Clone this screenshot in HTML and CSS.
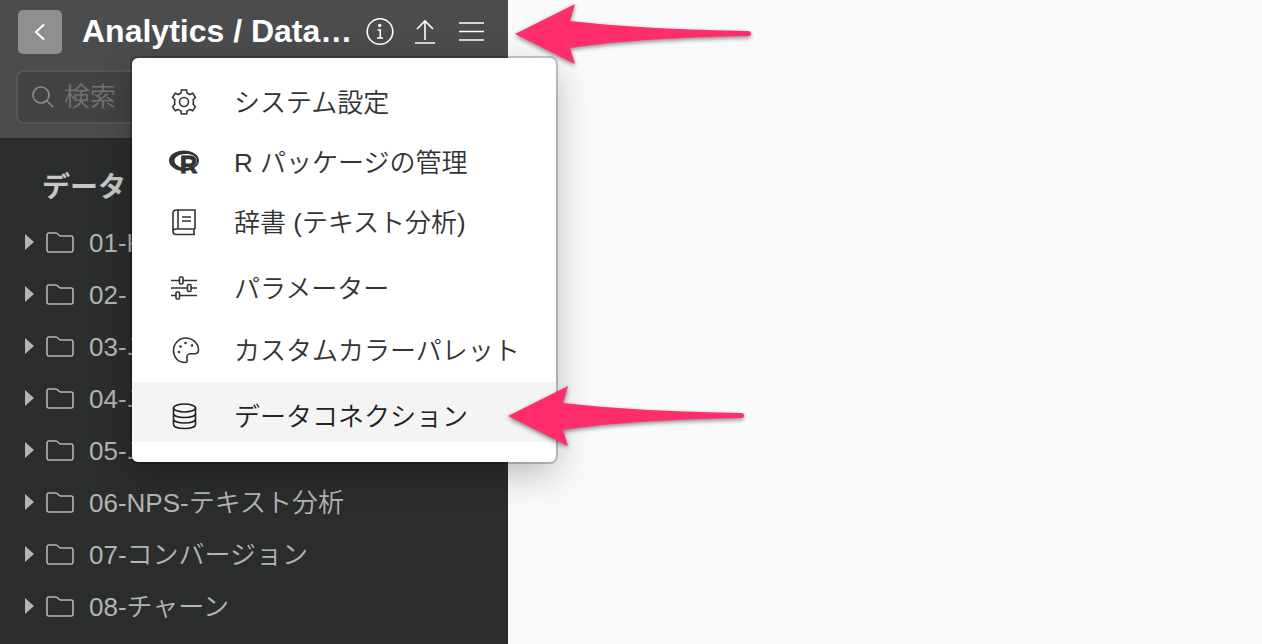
FILE: index.html
```html
<!DOCTYPE html>
<html lang="ja">
<head>
  <meta charset="UTF-8">
  <meta name="viewport" content="width=device-width, initial-scale=1.0">
  <title>Analytics</title>
  <link rel="stylesheet" href="styles.css">
</head>
<body>
  <aside class="sidebar">
    <header class="top">
      <div class="title-row">
        <button class="back" aria-label="戻る">
          <svg width="20" height="24" viewBox="0 0 20 24"><path d="M14 4.500L6 12l8 7.500"/></svg>
        </button>
        <h1>Analytics / Data…</h1>
        <div class="actions">
          <button aria-label="情報">
            <svg width="28" height="28" viewBox="0 0 28 28">
              <circle cx="14" cy="13.500" r="12.800"/>
              <circle class="dot" cx="13.700" cy="7.500" r="1.700"/>
              <path d="M11.500 12h2.800v7.500M11 20h6"/>
            </svg>
          </button>
          <button aria-label="アップロード">
            <svg width="24" height="28" viewBox="0 0 24 28"><path d="M11 22V3M3 11l8-8 8 8M1 25h20"/></svg>
          </button>
          <button aria-label="メニュー">
            <svg width="28" height="28" viewBox="0 0 28 28"><path d="M1 5h25M1 13.500h25M1 22h25"/></svg>
          </button>
        </div>
      </div>
      <div class="search">
        <svg width="22" height="22" viewBox="0 0 22 22"><circle cx="9" cy="9" r="8"/><path d="M15 15l6 6"/></svg>
        <input type="search" placeholder="検索" aria-label="検索">
      </div>
    </header>

    <section class="frames">
      <h2>データ</h2>
      <ul>
        <li><i class="arrow"></i><svg width="28" height="22"><use href="#folder"/></svg><a href="#">01-K</a></li>
        <li><i class="arrow"></i><svg width="28" height="22"><use href="#folder"/></svg><a href="#">02-</a></li>
        <li><i class="arrow"></i><svg width="28" height="22"><use href="#folder"/></svg><a href="#">03-ユ</a></li>
        <li><i class="arrow"></i><svg width="28" height="22"><use href="#folder"/></svg><a href="#">04-ユ</a></li>
        <li><i class="arrow"></i><svg width="28" height="22"><use href="#folder"/></svg><a href="#">05-ユ</a></li>
        <li><i class="arrow"></i><svg width="28" height="22"><use href="#folder"/></svg><a href="#">06-NPS-テキスト分析</a></li>
        <li><i class="arrow"></i><svg width="28" height="22"><use href="#folder"/></svg><a href="#">07-コンバージョン</a></li>
        <li><i class="arrow"></i><svg width="28" height="22"><use href="#folder"/></svg><a href="#">08-チャーン</a></li>
      </ul>
    </section>
  </aside>

  <nav class="menu">
    <div class="group">
      <button>
        <svg width="32" height="32" viewBox="0 0 32 32">
          <path d="M13.500 4h5l.7 3.200c1 .3 1.700.7 2.400 1.300l3.200-1.300 2.600 4.300-2.200 2.300c.3 1.500.3 3 0 4.400l2.200 2.300-2.600 4.300-3.200-1.300c-.7.600-1.400 1-2.400 1.300l-.7 3.200h-5l-.7-3.200c-1-.3-1.700-.7-2.400-1.300l-3.200 1.300-2.600-4.300 2.200-2.300c-.3-1.400-.3-2.900 0-4.400l-2.200-2.300 2.600-4.300 3.200 1.300c.7-.6 1.400-1 2.400-1.300z"/>
          <circle cx="16" cy="16" r="4.500"/>
        </svg>
        システム設定
      </button>
      <button>
        <svg class="r-logo" width="32" height="32" viewBox="0 0 32 32" aria-hidden="true">
          <path fill-rule="evenodd" d="M16 4.500c8.300 0 15 4.400 15 10s-6.700 10.500-15 10.500S1 20.100 1 14.500s6.700-10 15-10zM18 8C11.400 8 6.500 10.800 6.500 14.800S11.400 22 18 22s11-2.800 11-7.200S24.600 8 18 8z"/>
          <text x="12" y="27">R</text>
        </svg>
        R パッケージの管理
      </button>
      <button>
        <svg width="32" height="32" viewBox="0 0 32 32">
          <path d="M27 23V4H8.500C6 4 5 5.500 5 7.500V25M27 23H8c-4 0-4 5.500 0 5.500h19M26 23v5.500M10 4v19M14 11h9M14 15h9"/>
        </svg>
        辞書 (テキスト分析)
      </button>
    </div>
    <div class="group spaced">
      <button>
        <svg width="32" height="32" viewBox="0 0 32 32">
          <path d="M3 8.500h8M15 8.500h14M3 16h16M23 16h6M3 23.500h5M12 23.500h17"/>
          <rect x="11.500" y="5" width="3.500" height="7" rx="1"/>
          <rect x="19.500" y="12.500" width="3.500" height="7" rx="1"/>
          <rect x="8" y="20" width="3.500" height="7" rx="1"/>
        </svg>
        パラメーター
      </button>
      <button>
        <svg width="32" height="32" viewBox="0 0 32 32">
          <path d="M17 28.500C10 28.500 5.500 23 5.500 16.500S11 4 17.500 4C25 4 30.500 9.500 30.500 16c0 3-1.500 3.800-4 3.800h-4c-3 0-4 2-3.500 4.700.6 3 0 4-2 4z"/>
          <g class="dot">
            <circle cx="11" cy="18" r="1.300"/>
            <circle cx="12.500" cy="12.500" r="1.300"/>
            <circle cx="17.500" cy="9" r="1.300"/>
            <circle cx="24" cy="11.500" r="1.300"/>
          </g>
        </svg>
        カスタムカラーパレット
      </button>
      <button class="active">
        <svg width="32" height="32" viewBox="0 0 32 32">
          <ellipse cx="16.500" cy="8" rx="11" ry="4"/>
          <path d="M5.500 8v16.500c0 5.300 22 5.300 22 0V8M5.500 13.500c0 5.300 22 5.300 22 0M5.500 19c0 5.300 22 5.300 22 0"/>
        </svg>
        データコネクション
      </button>
    </div>
  </nav>

  <svg class="pointer pointer-top" width="240" height="64" viewBox="0 0 240 64"><use href="#pointer"/></svg>
  <svg class="pointer pointer-bottom" width="240" height="64" viewBox="0 0 240 64"><use href="#pointer"/></svg>

  <svg class="defs" width="0" height="0">
    <symbol id="folder" viewBox="0 0 28 22">
      <path d="M3 2h7c2 0 2.500 3 4.500 3H25c1.300 0 2 .7 2 2v12c0 1.300-.7 2-2 2H3c-1.300 0-2-.7-2-2V4c0-1.300.7-2 2-2z"/>
    </symbol>
    <symbol id="pointer" viewBox="0 0 240 64">
      <path d="M0 31L60 1l-5 17c50 6 120 9 178 10q3 0 3 2.500t-3 2.500c-65 1-135 5-178 12l5 16z"/>
    </symbol>
  </svg>
</body>
</html>
```

FILE: styles.css
```css
* { box-sizing: border-box; }
body {
  margin: 0;
  min-height: 100vh;
  background: #fafafa;
  font-family: "Liberation Sans", "Noto Sans CJK JP", sans-serif;
  font-size: 26px;
  font-weight: 350;
  overflow: hidden;
}
button {
  border: none;
  padding: 0;
  background: none;
  color: inherit;
  font: inherit;
  cursor: pointer;
}
svg {
  flex: none;
  display: block;
  fill: none;
  stroke: currentColor;
  stroke-width: 1.6;
}
.dot {
  fill: currentColor;
  stroke: none;
}
.defs { position: absolute; }

/* sidebar */
.sidebar {
  width: 508px;
  height: 100vh;
  overflow: hidden;
  background: #2b2d2c;
  color: #b3b5b4;
}
.top {
  padding: 10px 16px 14px;
  background: #4b4c4e;
}
.title-row {
  display: flex;
  align-items: center;
  height: 44px;
  margin: 0 6px 16px 2px;
  color: white;
}
.back {
  display: flex;
  align-items: center;
  justify-content: center;
  width: 44px;
  height: 44px;
  border-radius: 5px;
  background: #8f8f8f;
}
.back svg { stroke-width: 2; }
h1 {
  margin: 0 auto 0 20px;
  padding-bottom: 2px;
  font-size: 32px;
  font-weight: bold;
  line-height: 42px;
  white-space: nowrap;
}
.actions {
  display: flex;
  gap: 20px;
}
.search {
  display: flex;
  align-items: center;
  gap: 10px;
  height: 54px;
  padding: 0 14px;
  border: 2px solid #555657;
  border-radius: 8px;
  background: #434343;
  color: #8c8c8c;
}
.search input {
  flex: 1;
  min-width: 0;
  padding: 0;
  border: none;
  outline: none;
  background: none;
  color: white;
  font: inherit;
}
.search input::placeholder { color: #727272; }

.frames h2 {
  margin: 24px 0 2px 42px;
  color: #c6c8c7;
  font-size: 28px;
  font-weight: bold;
  line-height: 52px;
}
.frames ul {
  margin: 0;
  padding: 0;
  list-style: none;
}
.frames li {
  display: flex;
  align-items: center;
  height: 52px;
  padding-left: 25px;
  white-space: nowrap;
}
.frames a {
  margin-left: 15px;
  padding-top: 2px;
  color: inherit;
  line-height: 50px;
  text-decoration: none;
}
.arrow {
  margin-right: 12px;
  border-left: 9px solid #b3b5b4;
  border-top: 8px solid transparent;
  border-bottom: 8px solid transparent;
}

/* dropdown */
.menu {
  position: absolute;
  top: 58px;
  left: 132px;
  width: 424px;
  padding: 14px 0 20px;
  border-radius: 6px;
  background: white;
  box-shadow: 0 0 0 2px rgba(0, 0, 0, .2), 0 12px 36px rgba(0, 0, 0, .25);
  color: #333;
}
.group {
  display: flex;
  flex-direction: column;
}
.spaced {
  gap: 2px;
  margin-top: 6px;
}
.menu button {
  display: flex;
  align-items: center;
  gap: 34px;
  height: 60px;
  padding: 0 0 4px 36px;
  white-space: nowrap;
}
.menu svg { margin-top: 4px; }
.menu .active {
  padding-top: 8px;
  background: #f4f4f4;
  color: #222;
}
.r-logo {
  fill: currentColor;
  stroke: none;
}
.r-logo text {
  stroke: currentColor;
  stroke-width: 1;
  font-size: 24px;
  font-weight: bold;
}

/* callout arrows */
.pointer {
  position: absolute;
  fill: #ff2d6b;
  stroke: none;
  filter: drop-shadow(0 2px 2px rgba(0, 0, 0, .45));
}
.pointer-top {
  top: 3px;
  left: 515px;
}
.pointer-bottom {
  top: 385px;
  left: 508px;
}
```
